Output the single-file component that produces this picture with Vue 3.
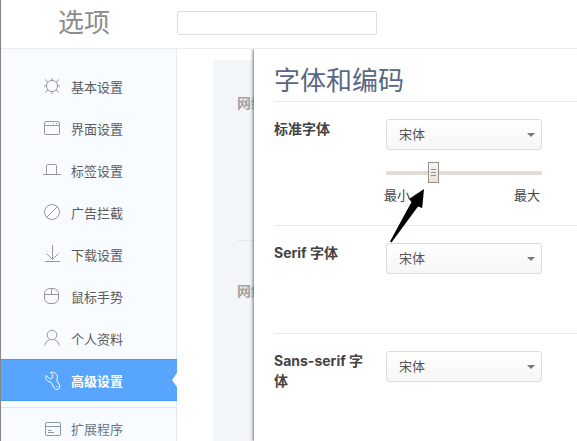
<script setup>
import { ref } from 'vue'

const items = [
  { icon: 'gear', label: '基本设置' },
  { icon: 'window', label: '界面设置' },
  { icon: 'tab', label: '标签设置' },
  { icon: 'block', label: '广告拦截' },
  { icon: 'download', label: '下载设置' },
  { icon: 'mouse', label: '鼠标手势' },
  { icon: 'user', label: '个人资料' },
  { icon: 'wrench', label: '高级设置', active: true },
  { icon: 'card', label: '扩展程序', separated: true },
]

const rows = [
  { id: 'standard', label: '标准字体', slider: true },
  { id: 'serif', label: 'Serif 字体' },
  { id: 'sans', label: 'Sans-serif 字体' },
]

const query = ref('')
const size = ref(29)
</script>

<template>
  <div class="page">
    <header class="header">
      <h1 class="title">选项</h1>
      <input v-model="query" class="search" type="text" aria-label="搜索" />
    </header>

    <div class="body">
      <nav class="sidebar">
        <a
          v-for="item in items"
          :key="item.label"
          href="#"
          class="item"
          :class="{ active: item.active, separated: item.separated }"
        >
          <svg class="icon" width="18" height="18" viewBox="0 0 18 18" aria-hidden="true">
            <g v-if="item.icon === 'gear'">
              <circle cx="9" cy="9" r="5.6" />
              <path d="M9 1v2.4M9 14.6V17M1 9h2.4M14.6 9H17M2 2.5l3 2.500M16 2.500l-3 2.500M2 15.500l3-2.500M16 15.500l-3-2.500" />
            </g>
            <g v-else-if="item.icon === 'window'">
              <rect x="1.5" y="2.5" width="15" height="13" rx="1.5" />
              <path d="M1.5 6.5h15M10 4.5h1M13 4.5h1" />
            </g>
            <path v-else-if="item.icon === 'tab'" d="M0 13.5h18M3.5 13.5v-9q0-1 1-1h8q1 0 1 1v9" />
            <g v-else-if="item.icon === 'block'">
              <circle cx="9" cy="9" r="7.5" />
              <path d="M3.8 14.2L14.2 3.8" />
            </g>
            <path v-else-if="item.icon === 'download'" d="M9.5 0v14M3.5 8.5l6 6l6-6M2 16.5h15" />
            <g v-else-if="item.icon === 'mouse'">
              <rect x="1.5" y="1.5" width="14" height="15" rx="5.5" />
              <path d="M1.5 7.5h14M8.5 1.5v6" />
            </g>
            <g v-else-if="item.icon === 'user'">
              <circle cx="9" cy="6" r="4.8" />
              <path d="M1.5 16.5q1-4.5 5-5.9M16.5 16.5q-1-4.5-5-5.9" />
            </g>
            <path
              v-else-if="item.icon === 'wrench'"
              d="M7.5 1.5L9.7 3.7V6.500L7.500 7.800L5.800 7L3.300 4.300C2.200 6.500 3 9.200 4.800 10.200C6.500 11 8.200 10.800 8.900 12.300L10.600 16.200C11.300 18 13.300 18.900 15 18.100C16.900 17.200 17.400 15.400 16.400 13.800L13.900 9.800C13.300 8.600 14.800 7.300 14.400 5.200C13.900 2.300 10.500 .500 7.500 1.500ZM13.500 15.500h1"
            />
            <g v-else>
              <rect x="2.5" y="2.5" width="15" height="13" rx="1.5" />
              <path d="M2.5 6.5h15M5 10.500h3.500M5 12.500h6" />
            </g>
          </svg>
          <span>{{ item.label }}</span>
        </a>
      </nav>

      <main class="main">
        <div class="backdrop">
          <section class="under">网络</section>
          <section class="under">网络</section>
        </div>

        <section class="dialog">
          <h2 class="heading">字体和编码</h2>
          <div v-for="row in rows" :key="row.id" class="row">
            <label class="label" :for="row.id">{{ row.label }}</label>
            <div class="field">
              <div class="picker">
                <select :id="row.id" class="select">
                  <option>宋体</option>
                </select>
              </div>
              <template v-if="row.slider">
                <input v-model="size" class="slider" type="range" min="0" max="100" aria-label="字体大小" />
                <div class="scale"><span>最小</span><span>最大</span></div>
                <svg class="pointer" width="36" height="54" viewBox="0 0 36 54" aria-hidden="true">
                  <path d="M35 0L20 10L22.5 13L1 52.5L2.5 53.5L29 17.5L33.2 19Z" />
                </svg>
              </template>
            </div>
          </div>
        </section>
      </main>
    </div>
  </div>
</template>

<style>
body {
  margin: 0;
  background: #fff;
}
</style>

<style scoped>
.page {
  box-sizing: border-box;
  display: flex;
  flex-direction: column;
  height: 100vh;
  overflow: hidden;
  border-left: 1px solid #868686;
  font-family: "Liberation Sans", "Noto Sans CJK SC", sans-serif;
  font-size: 13px;
  color: #444;
}
.header {
  display: flex;
  align-items: center;
  flex: none;
  height: 48px;
  padding-left: 57px;
  border-bottom: 1px solid #e9ecef;
}
.title {
  width: 119px;
  margin: 0;
  padding-bottom: 2px;
  box-sizing: border-box;
  font-size: 26px;
  line-height: 36px;
  font-weight: 400;
  color: #8c8c8c;
}
.search {
  box-sizing: border-box;
  width: 200px;
  height: 24px;
  margin-bottom: 2px;
  padding: 0 8px;
  border: 1px solid #ddd;
  border-radius: 2px;
  font: inherit;
  outline: none;
}
.body {
  display: flex;
  flex: 1;
  min-height: 0;
}
.sidebar {
  flex: none;
  box-sizing: border-box;
  width: 176px;
  padding-top: 16px;
  background: #f8fbff;
  border-right: 1px solid #e1e8f0;
}
.item {
  display: flex;
  align-items: center;
  gap: 10px;
  box-sizing: border-box;
  height: 42px;
  padding-left: 42px;
  color: #5c5c5c;
  text-decoration: none;
}
.item.active {
  position: relative;
  margin-right: -1px;
  background: #57a5ff;
  border-top: 1px solid #4a98f5;
  border-bottom: 1px solid #4a98f5;
  color: #fff;
  font-weight: bold;
}
.item.active::after {
  content: "";
  position: absolute;
  right: 0;
  top: 13px;
  border: solid transparent;
  border-width: 7px 5px 7px 0;
  border-right-color: #fff;
}
.item.separated {
  margin-top: 6px;
  border-top: 1px solid #dfe6ee;
  color: #6b7480;
}
.icon {
  flex: none;
  overflow: visible;
  fill: none;
  stroke: #999;
  stroke-width: 1;
}
.active .icon {
  stroke: #fff;
}
.separated .icon {
  stroke: #8c98a8;
}
.main {
  position: relative;
  flex: 1;
  min-width: 0;
  padding: 11px 0 0 36px;
  display: flex;
}
.backdrop {
  flex: 1;
  padding: 0 24px;
  background: #f2f6f9;
}
.under {
  box-sizing: border-box;
  height: 181px;
  padding-top: 33px;
  border-bottom: 1px solid #e4e8eb;
  font-size: 14px;
  line-height: 20px;
  font-weight: bold;
  color: #a2a2a2;
}
.under + .under {
  height: 240px;
  padding-top: 40px;
}
.dialog {
  position: absolute;
  top: 0;
  right: 0;
  bottom: 0;
  left: 77px;
  padding-left: 20px;
  background: #fff;
  box-shadow: -1px 0 3px #777;
  clip-path: inset(0 0 0 -4px);
}
.heading {
  margin: 0;
  padding: 14px 0 2px;
  font-size: 26px;
  line-height: 36px;
  font-weight: 400;
  color: #576785;
}
.row {
  display: flex;
  gap: 14px;
  box-sizing: border-box;
  min-height: 108px;
  padding: 17px 0;
  border-top: 1px solid #e9e9e9;
}
.label {
  width: 98px;
  flex: none;
  font-family: Inter, "Noto Sans CJK SC", sans-serif;
  font-size: 14px;
  line-height: 20px;
  font-weight: bold;
  color: #444;
}
.field {
  position: relative;
  width: 156px;
}
.picker {
  position: relative;
}
.picker::after {
  content: "";
  position: absolute;
  right: 7px;
  top: 14px;
  border: solid transparent;
  border-width: 4px 4px 0;
  border-top-color: #777;
  pointer-events: none;
}
.select {
  display: block;
  box-sizing: border-box;
  width: 100%;
  height: 31px;
  padding: 0 24px 0 12px;
  appearance: none;
  border: 1px solid #ddd;
  border-radius: 3px;
  background: linear-gradient(#fff, #f6f6f6);
  font: inherit;
  color: #555;
}
.slider {
  display: block;
  width: 100%;
  height: 21px;
  margin: 12px 0 3px;
  appearance: none;
  background: linear-gradient(#e1ddd6, #e1ddd6) center / 100% 4px no-repeat;
}
.slider::-webkit-slider-thumb {
  appearance: none;
  box-sizing: border-box;
  width: 11px;
  height: 21px;
  border: 1px solid #988f86;
  background:
    linear-gradient(#988f86, #988f86) 2px 6px / 5px 1px no-repeat,
    linear-gradient(#988f86, #988f86) 2px 9px / 5px 1px no-repeat,
    linear-gradient(#988f86, #988f86) 2px 12px / 5px 1px no-repeat,
    linear-gradient(#f8f7f5, #e6e2dd);
}
.scale {
  display: flex;
  justify-content: space-between;
  margin: 0 2px 0 -2px;
  padding-bottom: 2px;
  line-height: 20px;
}
.pointer {
  position: absolute;
  left: 3px;
  top: 70px;
  fill: #000;
}
</style>
